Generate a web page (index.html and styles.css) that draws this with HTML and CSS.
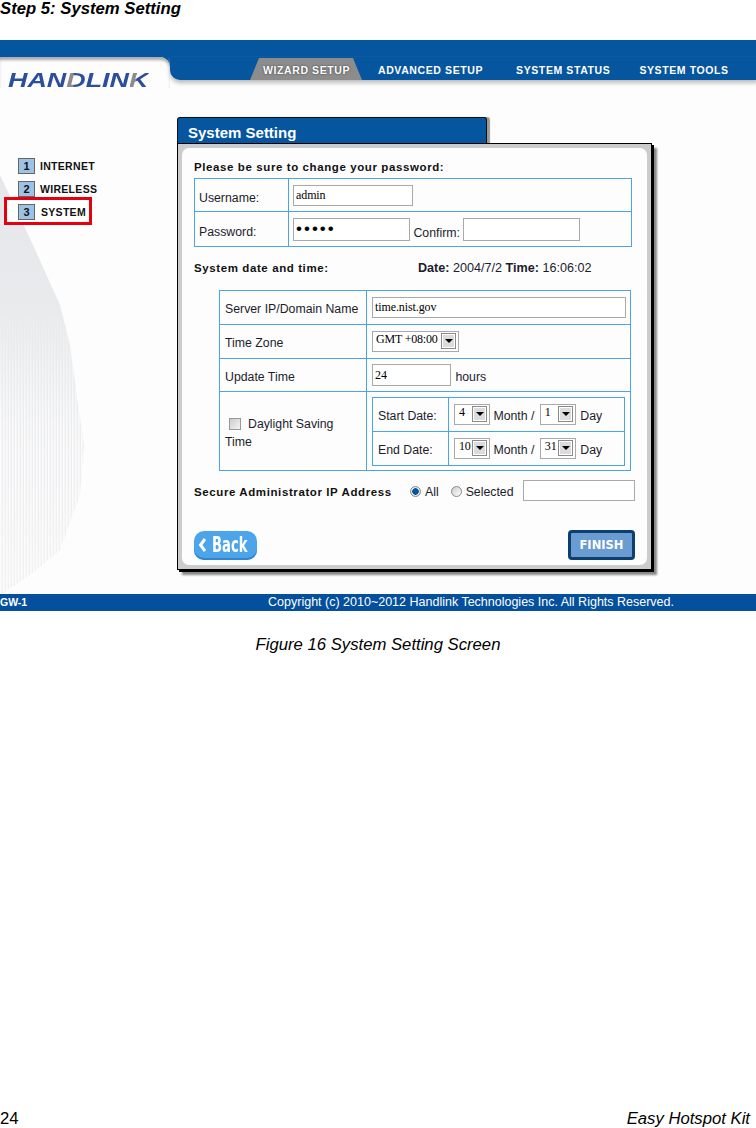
FILE: index.html
```html
<!DOCTYPE html>
<html lang="en">
<head>
  <meta charset="UTF-8">
  <meta name="viewport" content="width=device-width, initial-scale=1.0">
  <title>Step 5: System Setting</title>
  <link rel="stylesheet" href="styles.css">
</head>
<body>
  <div class="page">
    <h1 class="doc-title">Step 5: System Setting</h1>

    <div class="shot">
      <!-- faint fan picture behind the side menu -->
      <svg class="fan" width="90" height="420" viewBox="0 0 90 420">
        <defs>
          <linearGradient id="fanFill" x1="0" y1="0" x2="0" y2="1">
            <stop offset="0" stop-color="#e6e7ea"/>
            <stop offset="0.4" stop-color="#eaebed"/>
            <stop offset="1" stop-color="#f2f2f3"/>
          </linearGradient>
          <pattern id="fanDots" width="3" height="4" patternUnits="userSpaceOnUse">
            <rect width="1.6" height="4" fill="#fff"/>
          </pattern>
          <linearGradient id="fanFade" x1="0" y1="0" x2="0" y2="1">
            <stop offset="0.3" stop-color="#000"/>
            <stop offset="0.6" stop-color="#bbb"/>
          </linearGradient>
          <mask id="fanMask">
            <rect width="90" height="420" fill="url(#fanFade)"/>
          </mask>
        </defs>
        <polygon points="0,0 33,70 60,130 70,170 78,230 84,270 80,320 60,375 30,400 0,420" fill="url(#fanFill)"/>
        <polygon points="0,0 33,70 60,130 70,170 78,230 84,270 80,320 60,375 30,400 0,420" fill="url(#fanDots)" mask="url(#fanMask)"/>
      </svg>

      <header class="top-strip"></header>
      <div class="top-row">
        <div class="logo-block">
          <span class="logo">HA<span class="logo-n">N</span><span class="logo-d">D</span>LIN<span class="logo-k">K</span></span>
        </div>
        <nav class="nav">
          <a class="nav-tab">WIZARD SETUP</a>
          <a class="nav-item">ADVANCED SETUP</a>
          <a class="nav-item">SYSTEM STATUS</a>
          <a class="nav-item">SYSTEM TOOLS</a>
        </nav>
      </div>

      <div class="main">
        <ul class="steps">
          <li class="step"><span class="step-num">1</span>INTERNET</li>
          <li class="step"><span class="step-num">2</span>WIRELESS</li>
          <li class="step step-active"><span class="step-num">3</span>SYSTEM</li>
        </ul>

        <section class="panel">
          <h2 class="panel-tab">System Setting</h2>
          <div class="panel-body">
            <div class="panel-inner">
              <p class="section-head">Please be sure to change your password:</p>
              <table class="grid grid-account">
                <tr class="row-user">
                  <td class="cell-label">Username:</td>
                  <td class="cell-pad"><input class="field field-user" type="text" value="admin"></td>
                </tr>
                <tr class="row-pass">
                  <td class="cell-label">Password:</td>
                  <td class="cell-pad">
                    <input class="field field-pass" type="password" value="admin">
                    <span class="confirm-label">Confirm:</span>
                    <input class="field field-pass" type="text">
                  </td>
                </tr>
              </table>

              <div class="date-row">
                <span class="section-head date-head">System date and time:</span>
                <span class="date-now"><b>Date:</b> 2004/7/2 <b>Time:</b> 16:06:02</span>
              </div>

              <table class="grid grid-time">
                <tr class="row-a">
                  <td class="cell-label">Server IP/Domain Name</td>
                  <td class="cell-pad"><input class="field field-server" type="text" value="time.nist.gov"></td>
                </tr>
                <tr class="row-b">
                  <td class="cell-label">Time Zone</td>
                  <td class="cell-pad">
                    <div class="select select-zone"><span class="select-text">GMT +08:00</span><span class="arrow"></span></div>
                  </td>
                </tr>
                <tr class="row-c">
                  <td class="cell-label">Update Time</td>
                  <td class="cell-pad"><input class="field field-hours" type="text" value="24"> <span class="hours">hours</span></td>
                </tr>
                <tr class="row-d">
                  <td class="cell-label"><span class="checkbox"></span>Daylight Saving<br>Time</td>
                  <td class="cell-pad">
                    <table class="grid grid-dates">
                      <tr>
                        <td class="cell-label">Start Date:</td>
                        <td class="cell-date">
                          <div class="select select-num"><span class="select-text">4</span><span class="arrow"></span></div>
                          <span class="month">Month /</span>
                          <div class="select select-num"><span class="select-text">1</span><span class="arrow"></span></div>
                          <span class="day">Day</span>
                        </td>
                      </tr>
                      <tr>
                        <td class="cell-label">End Date:</td>
                        <td class="cell-date">
                          <div class="select select-num"><span class="select-text">10</span><span class="arrow"></span></div>
                          <span class="month">Month /</span>
                          <div class="select select-num"><span class="select-text">31</span><span class="arrow"></span></div>
                          <span class="day">Day</span>
                        </td>
                      </tr>
                    </table>
                  </td>
                </tr>
              </table>

              <div class="secure-row">
                <span class="section-head secure-head">Secure Administrator IP Address</span>
                <span class="radio radio-on"></span><span class="radio-text">All</span>
                <span class="radio"></span><span class="radio-text">Selected</span>
                <input class="field field-ip" type="text">
              </div>

              <div class="button-row">
                <button class="btn-back">
                  <svg class="back-icon" width="9" height="16" viewBox="0 0 9 16"><polyline points="7,2 2.5,8 7,14" fill="none" stroke="#fff" stroke-width="3"/></svg>
                  <span class="back-text">Back</span>
                </button>
                <button class="btn-finish">FINISH</button>
              </div>
            </div>
          </div>
        </section>
      </div>

      <footer class="shot-footer">
        <span class="model">GW-1</span>
        <span class="copyright">Copyright (c) 2010~2012 Handlink Technologies Inc. All Rights Reserved.</span>
      </footer>
    </div>

    <p class="caption">Figure 16 System Setting Screen</p>

    <footer class="doc-footer">
      <span class="page-num">24</span>
      <span class="doc-name">Easy Hotspot Kit</span>
    </footer>
  </div>
</body>
</html>
```
FILE: styles.css
```css
* {
  box-sizing: border-box;
}

body {
  margin: 0;
  background-color: #fff;
  font-family: "Liberation Sans", Arial, sans-serif;
  color: #000;
}

.page {
  display: flex;
  flex-direction: column;
  height: 1128px;
}

.doc-title {
  margin: 0 0 21px;
  height: 19px;
  font-size: 16.7px;
  line-height: 17px;
  font-style: italic;
  font-weight: bold;
}

/* screenshot */
.shot {
  position: relative;
  height: 571px;
  background-color: #fdfdfd;
  display: flex;
  flex-direction: column;
}

.fan {
  position: absolute;
  left: 0;
  top: 135px;
}

.top-strip {
  height: 17px;
  background-color: #05559f;
  flex: none;
}

.top-row {
  position: relative;
  display: flex;
  height: 31px;
  flex: none;
  background: linear-gradient(#05559f 12px, transparent 12px);
}

.logo-block {
  width: 170px;
  flex: none;
  background-color: #fdfdfd;
  border-top-right-radius: 10px;
  box-shadow: inset 0 4px 3px -1px #a8a8a8;
  padding: 14px 0 0 8px;
}

.logo {
  display: block;
  width: 112px;
  font-size: 21px;
  line-height: 17px;
  font-weight: bold;
  font-style: italic;
  color: #2b4f9e;
  white-space: nowrap;
  transform: scaleX(1.28);
  transform-origin: left;
}

.logo-d, .logo-k {
  background: linear-gradient(90deg, #8c8c8c 35%, #2b4f9e 36%);
  -webkit-background-clip: text;
  background-clip: text;
  color: transparent;
}

.nav {
  flex: 1;
  height: 23px;
  padding-left: 80px;
  display: flex;
  align-items: stretch;
  background-color: #05559f;
  border-bottom-left-radius: 10px;
  box-shadow: 0 3px 4px #bbb;
}

.nav a {
  font-size: 10.5px;
  font-weight: bold;
  letter-spacing: 0.6px;
  color: #fff;
  line-height: 26px;
  white-space: nowrap;
}

.nav-tab {
  width: 112px;
  margin-top: 1px;
  margin-right: 16px;
  padding-left: 13px;
  background-color: #8c8c8c;
  clip-path: polygon(9px 0, calc(100% - 9px) 0, 100% 100%, 0 100%);
  text-shadow: 0 0 2px #333;
  line-height: 24px !important;
}

.nav-item {
  margin-right: 29px;
}

.nav-tab + .nav-item {
  margin-right: 33px;
}

.main {
  position: relative;
  display: flex;
  height: 506px;
  flex: none;
}

/* wizard steps */
.steps {
  width: 177px;
  flex: none;
  margin: 0;
  padding: 70px 0 0 18px;
  list-style: none;
}

.step {
  display: flex;
  align-items: center;
  gap: 5px;
  height: 16px;
  margin-bottom: 7px;
  font-size: 10.5px;
  font-weight: bold;
  letter-spacing: 0.3px;
  color: #111;
}

.step-num {
  width: 17px;
  height: 16px;
  background-color: #9cc2e6;
  border: 1px solid #666;
  text-align: center;
  font-size: 11px;
  line-height: 14px;
  letter-spacing: 0;
}

.step-active {
  width: 88px;
  height: 28px;
  margin: -7px 0 0 -14px;
  padding-left: 11px;
  padding-top: 1px;
  border: 3px solid #e6000f;
  background-color: #fff;
  gap: 6px;
}

/* setting panel */
.panel {
  width: 475px;
  margin-top: 29px;
}

.panel-tab {
  position: relative;
  width: 310px;
  height: 27px;
  margin: 0;
  padding: 6px 0 0 10px;
  background-color: #05559f;
  border: 1px solid #111;
  border-bottom: 0;
  border-radius: 3px 3px 0 0;
  box-shadow: 3px 0 1px #999;
  color: #fff;
  font-size: 15px;
  line-height: 18px;
  font-weight: bold;
}

.panel-body {
  position: relative;
  height: 427px;
  margin-top: -1px;
  padding: 4px;
  background-color: #ccc;
  border: 1px solid #000;
  box-shadow: 2px 2px 0 #000, 5px 5px 2px #888;
}

.panel-inner {
  height: 100%;
  padding: 12px 12px 6px;
  background-color: #fdfdfd;
  border-radius: 7px;
}

.section-head {
  margin: 0;
  font-size: 11.5px;
  line-height: 14px;
  font-weight: bold;
  letter-spacing: 0.6px;
  color: #111;
}

.grid {
  border-collapse: collapse;
  table-layout: fixed;
  font-size: 12.3px;
  color: #1c1c2c;
}

.grid td {
  border: 1px solid #4ba3e8;
  padding: 0;
}

.cell-label {
  padding: 3px 2px 0 5px !important;
}

.cell-pad {
  padding-left: 5px !important;
}

.grid-account {
  width: 438px;
  margin-top: 4px;
}

.grid-account .cell-label {
  width: 94px;
  padding-top: 5px !important;
  padding-left: 4px !important;
}

.row-user {
  height: 33px;
}

.row-pass {
  height: 35px;
}

.field {
  height: 21px;
  padding: 0 2px;
  border: 1px solid #a9a9a9;
  background-color: #fff;
  font-family: "Liberation Serif", serif;
  font-size: 12px;
  letter-spacing: -0.1px;
  color: #000;
  vertical-align: middle;
  border-radius: 0;
  outline: none;
}

.field-user {
  width: 120px;
}

.field-pass {
  width: 117px;
  height: 23px;
  font-family: "Liberation Sans", sans-serif;
  font-size: 17px;
  letter-spacing: 2px;
}

.grid-account .cell-pad {
  padding-left: 4px !important;
}

.confirm-label {
  vertical-align: -4px;
}

.date-row {
  display: flex;
  margin-top: 14px;
  height: 14px;
  font-size: 12.6px;
  line-height: 14px;
  color: #1c1c2c;
}

.date-head {
  width: 224px;
  flex: none;
}

.date-now {
  white-space: nowrap;
}

.grid-time {
  width: 412px;
  margin: 15px 0 0 25px;
}

.grid-time > tbody > tr > .cell-label {
  width: 147px;
}

.row-a {
  height: 34px;
}

.row-b {
  height: 34px;
}

.row-c {
  height: 33px;
}

.row-d {
  height: 79px;
}

.row-d > .cell-label {
  line-height: 18px;
}

.checkbox {
  display: inline-block;
  width: 12px;
  height: 12px;
  margin: 0 7px 0 4px;
  border: 1px solid #999;
  background: linear-gradient(135deg, #ccc, #f4f4f4);
  vertical-align: -2px;
}

.field-server {
  display: block;
  width: 254px;
}

.field-hours {
  width: 79px;
  height: 22px;
}

.hours {
  margin-left: 1px;
  vertical-align: -3px;
}

.select {
  display: inline-flex;
  align-items: center;
  justify-content: space-between;
  border: 1px solid #a9a9a9;
  background-color: #fff;
  font-family: "Liberation Serif", serif;
  font-size: 12px;
  vertical-align: middle;
  color: #000;
}

.select-zone {
  display: flex;
  width: 87px;
  height: 21px;
  padding: 0 2px 2px 3px;
}

.select-num {
  width: 36px;
  height: 21px;
  padding: 0 2px 2px 4px;
}

.select-text {
  margin-top: -2px;
  letter-spacing: -0.2px;
}

.arrow {
  position: relative;
  flex: none;
  width: 15px;
  height: 16px;
  margin-top: 1px;
  background-color: #dcdcdc;
  border: 1px solid #8a8a8a;
  box-shadow: inset 0 0 0 1px #fff;
}

.arrow::after {
  content: "";
  position: absolute;
  left: 3px;
  top: 5px;
  border-style: solid;
  border-width: 4px 4px 0;
  border-color: #000 transparent transparent;
}

.grid-dates {
  width: 253px;
}

.grid-dates .cell-label {
  width: 76px;
}

.grid-dates tr {
  height: 34px;
}

.cell-date {
  padding-left: 5px !important;
  white-space: nowrap;
}

.cell-date span {
  vertical-align: -3px;
}

.cell-date .select-text {
  vertical-align: baseline;
}

.cell-date .month {
  margin-right: 2px;
}

.cell-date .day {
  margin-left: 1px;
}

.secure-row {
  display: flex;
  align-items: center;
  height: 21px;
  margin-top: 9px;
  font-size: 12.3px;
  color: #1c1c2c;
}

.secure-head {
  width: 216px;
  flex: none;
  padding-top: 3px;
  white-space: nowrap;
}

.radio {
  width: 11px;
  height: 11px;
  flex: none;
  margin-top: 2px;
  border: 1px solid #888;
  border-radius: 50%;
  background: linear-gradient(135deg, #ccc, #fff);
}

.radio-on {
  background: radial-gradient(circle, #05559f 0 3px, #e4e4e4 3.5px);
}

.radio-text {
  margin: 3px 12px 0 4px;
}

.field-ip {
  width: 112px;
  margin-left: -3px;
}

.button-row {
  display: flex;
  justify-content: space-between;
  align-items: flex-end;
  margin-top: 29px;
}

.btn-back {
  display: flex;
  align-items: center;
  width: 63px;
  height: 29px;
  padding: 0 0 2px 4px;
  border: none;
  border-radius: 10px;
  background-color: #4ca4ea;
  box-shadow: inset 0 -2px 0 #2f86cf;
  color: #fff;
  overflow: hidden;
}

.back-text {
  display: block;
  width: 36px;
  margin-left: 5px;
  font-family: "DejaVu Sans", sans-serif;
  font-size: 22px;
  line-height: 26px;
  font-weight: bold;
  white-space: nowrap;
  transform: scaleX(0.6);
  transform-origin: left;
}

.btn-finish {
  width: 67px;
  height: 30px;
  padding: 0;
  border: 3px solid #0c3e70;
  border-radius: 4px;
  background-color: #6a9bd1;
  color: #fff;
  font-family: "DejaVu Sans", sans-serif;
  font-size: 11.5px;
  font-weight: bold;
}

/* blue line at the bottom of the screenshot */
.shot-footer {
  position: relative;
  display: flex;
  justify-content: space-between;
  height: 17px;
  flex: none;
  padding-right: 82px;
  background-color: #05509c;
  color: #fff;
  line-height: 17px;
}

.model {
  font-size: 10.5px;
  font-weight: bold;
}

.copyright {
  font-size: 12.5px;
}

.caption {
  margin: 25px 0 0;
  text-align: center;
  font-size: 16.7px;
  line-height: 18px;
  font-style: italic;
}

.doc-footer {
  display: flex;
  justify-content: space-between;
  margin-top: auto;
  padding: 0 6px 0 0;
  font-size: 16.7px;
  line-height: 18px;
}

.doc-name {
  font-style: italic;
}
```
